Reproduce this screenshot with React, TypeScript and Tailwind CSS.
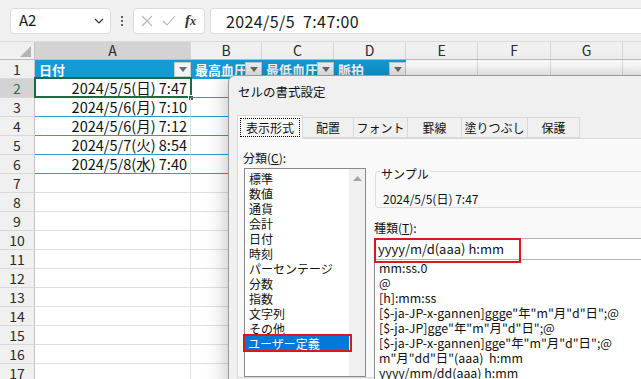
import React from 'react';

const COLS = [
  { k: 'A', w: 'w-[156px]' },
  { k: 'B', w: 'w-[71px]' },
  { k: 'C', w: 'w-[72px]' },
  { k: 'D', w: 'w-[72px]' },
  { k: 'E', w: 'w-[72px]' },
  { k: 'F', w: 'w-[73px]' },
  { k: 'G', w: 'w-[72px]' },
  { k: '', w: 'w-[40px]' },
];

const DATES = [
  '2024/5/5(日) 7:47',
  '2024/5/6(月) 7:10',
  '2024/5/6(月) 7:12',
  '2024/5/7(火) 8:54',
  '2024/5/8(水) 7:40',
];

const HEADERS = ['日付', '最高血圧', '最低血圧', '脈拍'];

const CATEGORIES = [
  '標準',
  '数値',
  '通貨',
  '会計',
  '日付',
  '時刻',
  'パーセンテージ',
  '分数',
  '指数',
  '文字列',
  'その他',
  'ユーザー定義',
];

const FORMATS = [
  'mm:ss.0',
  '@',
  '[h]:mm:ss',
  '[$-ja-JP-x-gannen]ggge"年"m"月"d"日";@',
  '[$-ja-JP]gge"年"m"月"d"日";@',
  '[$-ja-JP-x-gannen]gge"年"m"月"d"日";@',
  'm"月"dd"日"(aaa)  h:mm',
  'yyyy/mm/dd(aaa) h:mm',
];

const TABS = [
  { label: '表示形式', w: 'w-[66px]' },
  { label: '配置', w: 'w-[51px]' },
  { label: 'フォント', w: 'w-[54px]' },
  { label: '罫線', w: 'w-[54px]' },
  { label: '塗りつぶし', w: 'w-[66px]' },
  { label: '保護', w: 'w-[52px]' },
];

function DropBtn() {
  return (
    <span className="shrink-0 w-[17px] h-[15px] bg-[#f4f4f4] border border-[#c8c8c8] flex items-center justify-center">
      <svg width="8" height="5" viewBox="0 0 8 5">
        <path d="M0 0 L8 0 L4 5 Z" fill="#6b6b6b" />
      </svg>
    </span>
  );
}

function FormulaBar() {
  return (
    <div className="h-[41px] bg-[#f0f0f0] flex items-center pl-[10px]">
      {/* name box */}
      <div className="w-[101px] h-[26px] bg-white border border-[#dcdcdc] rounded-[4px] flex items-center pl-[8px] pr-[6px] justify-between">
        <span className="text-[15px] text-[#1a1a1a]">A2</span>
        <svg width="10" height="6" viewBox="0 0 10 6">
          <path d="M1 1 L5 5 L9 1" stroke="#333" strokeWidth="1.2" fill="none" />
        </svg>
      </div>
      <div className="w-[22px] flex flex-col items-center gap-[2px]">
        <span className="w-[2px] h-[2px] bg-[#333] rounded-full" />
        <span className="w-[2px] h-[2px] bg-[#333] rounded-full" />
        <span className="w-[2px] h-[2px] bg-[#333] rounded-full" />
      </div>
      <div className="w-[72px] h-[26px] bg-white border border-[#dcdcdc] rounded-[4px] flex items-center pl-[7px] gap-[9px]">
        <svg width="12" height="12" viewBox="0 0 12 12">
          <path d="M1 1 L11 11 M11 1 L1 11" stroke="#b5b5b5" strokeWidth="1.1" />
        </svg>
        <svg width="14" height="11" viewBox="0 0 14 11">
          <path d="M1 6 L5 10 L13 1" stroke="#b5b5b5" strokeWidth="1.1" fill="none" />
        </svg>
        <span className="font-['Liberation_Serif',serif] italic font-bold text-[15px] text-[#333] leading-none">
          f<span className="text-[12px]">x</span>
        </span>
      </div>
      <div className="ml-[5px] flex-1 h-[26px] bg-white border border-[#dcdcdc] rounded-l-[4px] border-r-0 flex items-center pl-[15px]">
        <span className="text-[16px] tracking-[0.4px] text-[#1a1a1a] whitespace-pre">2024/5/5  7:47:00</span>
      </div>
    </div>
  );
}

function ColumnHeader() {
  return (
    <div className="flex h-[19px] bg-[#f0f0f0] border-t border-[#dadada] border-b border-b-[#bcbcbc]">
      <div className="w-[35px] shrink-0 border-r border-[#c4c4c4] flex items-end justify-end pr-[3px] pb-[2px]">
        <svg width="11" height="11" viewBox="0 0 11 11">
          <path d="M11 0 L11 11 L0 11 Z" fill="#b4b4b4" />
        </svg>
      </div>
      {COLS.map((c, i) => (
        <div
          key={i}
          className={`${c.w} shrink-0 flex items-center justify-center border-r border-[#d6d6d6] text-[14px] text-[#2a2a2a] ${
            c.k === 'A' ? 'bg-[#d3d3d3]' : ''
          }`}
        >
          {c.k}
        </div>
      ))}
    </div>
  );
}

function Row({ n }: { n: number }) {
  const isHead = n === 1;
  const isData = n >= 2 && n <= 6;
  return (
    <div className="flex h-[19px]">
      <div
        className={`w-[35px] shrink-0 border-r border-[#c4c4c4] border-b border-b-[#d8d8d8] flex items-center justify-center text-[14px] ${
          n === 2 ? 'bg-[#d3d3d3] text-[#217346]' : 'bg-[#f0f0f0] text-[#2a2a2a]'
        }`}
      >
        {n}
      </div>
      {COLS.map((c, i) => {
        if (isHead && i < 4) {
          return (
            <div
              key={i}
              className={`${c.w} shrink-0 bg-[#139bd5] flex items-center pl-[4px] overflow-hidden`}
            >
              <span className="flex-1 min-w-0 overflow-hidden whitespace-nowrap text-[13px] font-bold text-white">
                {HEADERS[i]}
              </span>
              <DropBtn />
            </div>
          );
        }
        if (isData && i < 4) {
          return (
            <div
              key={i}
              className={`${c.w} shrink-0 relative border-b border-[#2d9ad6] ${
                i === 0 ? 'border-r border-r-[#e0e0e0]' : ''
              } flex items-center justify-end pr-[3px] text-[14.5px] text-[#111]`}
            >
              {i === 0 ? DATES[n - 2] : ''}
              {n === 2 && i === 0 && (
                <>
                  <span className="absolute -left-[1px] -top-[2px] -right-[2px] -bottom-[1px] border-2 border-[#1e6b40]" />
                  <span className="absolute -right-[4px] -bottom-[4px] w-[6px] h-[6px] bg-[#1e6b40] border border-white" />
                </>
              )}
            </div>
          );
        }
        return <div key={i} className={`${c.w} shrink-0 border-r border-b border-[#e0e0e0]`} />;
      })}
    </div>
  );
}

function Dialog() {
  return (
    <div className="absolute left-[228px] top-[75px] w-[430px] h-[320px] bg-[#f0f0f0] border border-[#9a9a9a] rounded-tl-[7px] shadow-[0_0_22px_rgba(0,0,0,0.28)] text-[12px] text-[#111]">
      <div className="h-[33px] flex items-center pl-[9px] text-[12.5px]">セルの書式設定</div>
      <div className="h-[6px]" />
      {/* tabs */}
      <div className="flex items-end h-[23px] ml-[8px]">
        {TABS.map((t, i) =>
          i === 0 ? (
            <div
              key={i}
              className={`${t.w} h-[24px] -mb-[1px] relative z-10 bg-[#f9f9f9] border border-[#d9d9d9] border-b-0 flex items-center justify-center px-[2px] pt-[2px] pb-[2px]`}
            >
              <span className="w-full h-full border border-dotted border-black flex items-center justify-center">
                {t.label}
              </span>
            </div>
          ) : (
            <div
              key={i}
              className={`${t.w} h-[21px] bg-[#f0f0f0] border border-[#d9d9d9] border-l-0 flex items-center justify-center`}
            >
              {t.label}
            </div>
          )
        )}
      </div>
      {/* content panel */}
      <div className="ml-[8px] h-[240px] bg-[#f9f9f9] border border-[#d9d9d9] flex pl-[5px] pt-[11px]">
        {/* left: category */}
        <div className="w-[123px] shrink-0 flex flex-col">
          <div className="h-[16px] leading-[16px] mb-[2px]">
            分類(<span className="underline">C</span>):
          </div>
          <div className="ml-[1px] flex-1 bg-white border border-[#8a8a8a] flex">
            <div className="flex-1 pt-[2px] pl-[1px]">
              {CATEGORIES.map((c, i) =>
                i === CATEGORIES.length - 1 ? (
                  <div key={i} className="h-[15px] relative -ml-[1px]">
                    <span className="absolute -left-[2px] -top-[2px] -right-[3px] -bottom-[1px] border-2 border-[#e0151b]" />
                    <div className="h-[15px] bg-[#0078d7] text-white leading-[15px] pl-[3px]">{c}</div>
                  </div>
                ) : (
                  <div key={i} className="h-[15px] leading-[15px] pl-[3px]">
                    {c}
                  </div>
                )
              )}
            </div>
            <div className="w-[16px] bg-[#f0f0f0] flex justify-center pt-[7px]">
              <svg width="9" height="5" viewBox="0 0 9 5">
                <path d="M0 5 L9 5 L4.5 0 Z" fill="#a3a3a3" />
              </svg>
            </div>
          </div>
        </div>
        {/* right: sample & type */}
        <div className="ml-[8px] w-[300px] shrink-0 flex flex-col pt-[21px]">
          <div className="relative h-[42px] ml-[1px] border border-[#dcdcdc] rounded-[3px]">
            <span className="absolute left-[4px] -top-[6px] bg-[#f9f9f9] px-[1px] leading-[16px]">サンプル</span>
            <div className="pl-[7px] pt-[19px] leading-[16px]">2024/5/5(日) 7:47</div>
          </div>
          <div className="h-[16px] leading-[16px] mt-[12px] mb-[2px]">
            種類(<span className="underline">T</span>):
          </div>
          <div className="relative h-[24px] bg-white border border-[#b5b5b5] flex items-center pl-[3px] text-[13px]">
            <span className="absolute -left-[1px] -top-[1px] w-[147px] h-[25px] border-2 border-[#e0151b]" />
            yyyy/m/d(aaa) h:mm
          </div>
          <div className="h-[200px] bg-white border border-[#8a8a8a] border-t-0 pl-[4px] pt-[1px] text-[12.4px]">
            {FORMATS.map((f, i) => (
              <div key={i} className="h-[15px] leading-[15px] whitespace-pre">
                {f}
              </div>
            ))}
          </div>
        </div>
      </div>
    </div>
  );
}

export default function App() {
  const rows = Array.from({ length: 17 }, (_, i) => i + 1);
  return (
    <div className="w-[641px] h-[379px] relative overflow-hidden bg-white font-['Noto_Sans_CJK_JP',sans-serif]">
      <FormulaBar />
      <ColumnHeader />
      {rows.map((n) => (
        <Row key={n} n={n} />
      ))}
      <Dialog />
    </div>
  );
}
